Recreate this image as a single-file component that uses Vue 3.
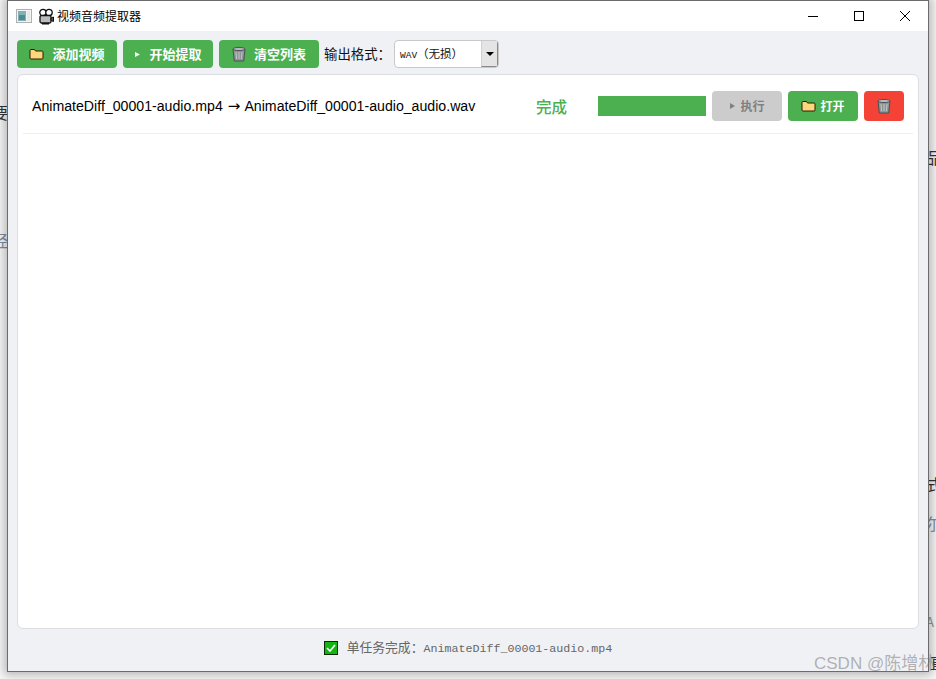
<script setup>
const fragments = [
  { text: '要', cls: 'frag-left', top: 103 },
  { text: '经', cls: 'frag-left frag-blue', top: 231 },
  { text: '品', cls: 'frag-right', top: 148 },
  { text: '式', cls: 'frag-right', top: 475 },
  { text: '尔', cls: 'frag-right frag-blue', top: 514 },
  { text: 'A', cls: 'frag-right frag-grey', top: 613 },
  { text: '直', cls: 'frag-right frag-far', top: 653 },
]
</script>

<template>
  <div class="page">
    <span v-for="f in fragments" :key="f.top" class="frag" :class="f.cls" :style="{ top: f.top + 'px' }">{{ f.text }}</span>
    <div class="top-scrap"></div>

    <div class="window">
      <header class="titlebar">
        <svg class="win-thumb" width="16" height="14" viewBox="0 0 16 14">
          <rect x="0.5" y="0.5" width="15" height="13" fill="#f4f4f4" stroke="#b0b0b0" />
          <rect x="2" y="2" width="8" height="10" fill="#7fb2b4" />
          <rect x="3" y="6" width="6" height="5" fill="#4f8a94" />
          <rect x="11" y="2" width="3" height="10" fill="#e4eaea" />
        </svg>
        <svg class="app-icon" width="16" height="17" viewBox="0 0 16 17">
          <circle cx="5" cy="4.500" r="3.200" fill="#fff" stroke="#111" stroke-width="1.300" />
          <circle cx="11" cy="4.500" r="3.200" fill="#fff" stroke="#111" stroke-width="1.300" />
          <rect x="2" y="7.500" width="11" height="7.500" rx="1.500" fill="#bbb" stroke="#111" stroke-width="1.300" />
          <path d="M13 10l2.500-1v4.500L13 12.500z" fill="#555" stroke="#111" />
          <rect x="4" y="15" width="7" height="1.500" fill="#111" />
        </svg>
        <span class="title">视频音频提取器</span>
        <div class="win-controls">
          <span class="ctl"><svg width="12" height="12" viewBox="0 0 12 12"><path d="M1 6.500h10" stroke="#000" /></svg></span>
          <span class="ctl"><svg width="12" height="12" viewBox="0 0 12 12"><rect x="1.500" y="1.500" width="9" height="9" fill="none" stroke="#000" /></svg></span>
          <span class="ctl"><svg width="12" height="12" viewBox="0 0 12 12"><path d="M1 1l10 10M11 1L1 11" stroke="#000" /></svg></span>
        </div>
      </header>

      <div class="body">
        <div class="toolbar">
          <button class="btn tool w100">
            <svg width="15" height="12" viewBox="0 0 15 12"><path d="M1 2.500a1 1 0 0 1 1-1h3.500l1 1.500H13a1 1 0 0 1 1 1V10a1 1 0 0 1-1 1H2a1 1 0 0 1-1-1z" fill="#ffd77a" stroke="#2a1d05" /></svg>
            <span>添加视频</span>
          </button>
          <button class="btn tool w90">
            <svg width="7" height="7" viewBox="0 0 7 7"><path d="M1 1l5 2.500L1 6z" fill="#fff" /></svg>
            <span>开始提取</span>
          </button>
          <button class="btn tool w100">
            <svg width="14" height="16" viewBox="0 0 14 16"><path d="M1 3h12l-1.300 12H2.300z" fill="#8d9597" stroke="#4a5052" /><ellipse cx="7" cy="3" rx="6" ry="1.600" fill="#b4babc" stroke="#4a5052" /><path d="M4 6l.6 7M7 6v7M10 6l-.6 7" stroke="#c0c6c8" /></svg>
            <span>清空列表</span>
          </button>
          <span class="fmt-label">输出格式：</span>
          <div class="combo">
            <span class="combo-text"><span class="mono">WAV</span>（无损）</span>
            <span class="combo-arrow"><i></i></span>
          </div>
        </div>

        <div class="panel">
          <div class="row">
            <span class="name">AnimateDiff_00001-audio.mp4 <span class="arrow">→</span> AnimateDiff_00001-audio_audio.wav</span>
            <span class="state">完成</span>
            <div class="bar"></div>
            <button class="btn act disabled">
              <svg width="7" height="8" viewBox="0 0 7 8"><path d="M1 1l5 3-5 3z" fill="#808080" /></svg>
              <span>执行</span>
            </button>
            <button class="btn act">
              <svg width="15" height="12" viewBox="0 0 15 12"><path d="M1 2.500a1 1 0 0 1 1-1h3.500l1 1.500H13a1 1 0 0 1 1 1V10a1 1 0 0 1-1 1H2a1 1 0 0 1-1-1z" fill="#ffd77a" stroke="#2a1d05" /></svg>
              <span>打开</span>
            </button>
            <button class="btn act del">
              <svg width="14" height="16" viewBox="0 0 14 16"><path d="M1 3h12l-1.300 12H2.300z" fill="#8d9597" stroke="#4a5052" /><ellipse cx="7" cy="3" rx="6" ry="1.600" fill="#b4babc" stroke="#4a5052" /><path d="M4 6l.6 7M7 6v7M10 6l-.6 7" stroke="#c0c6c8" /></svg>
            </button>
          </div>
        </div>

        <footer class="status">
          <span class="check"><svg width="10" height="8" viewBox="0 0 10 8"><path d="M1 4l3 3 5-6" fill="none" stroke="#fff" stroke-width="1.600" /></svg></span>
          <span class="status-text">单任务完成：<span class="mono-status">AnimateDiff_00001-audio.mp4</span></span>
        </footer>
      </div>
    </div>

    <span class="watermark">CSDN @陈增林</span>
  </div>
</template>

<style scoped>
.page {
  position: relative;
  width: 936px;
  height: 679px;
  overflow: hidden;
  background: #f7f7f7;
  font-family: "Noto Sans CJK SC", "Liberation Sans", sans-serif;
  box-sizing: border-box;
  padding-left: 7px;
}
.page * { box-sizing: border-box; }

.frag {
  position: absolute;
  font-size: 16px;
  line-height: 18px;
  color: #333;
}
.frag-left { left: -8px; }
.frag-right { left: 926px; }
.frag-far { left: 930px; }
.frag-blue { color: #7f8fa3; }
.frag-grey { color: #8a95a0; font-size: 13px; }
.top-scrap {
  position: absolute;
  left: 160px;
  top: 0;
  width: 260px;
  height: 1px;
  background: #777;
}

.window {
  position: relative;
  display: flex;
  flex-direction: column;
  width: 922px;
  height: 672px;
  background: #f0f1f5;
  border: 1px solid #6b6b6b;
  box-shadow: 0 0 9px 3px rgba(0, 0, 0, 0.26);
}
.titlebar {
  display: flex;
  align-items: center;
  height: 30px;
  background: #fff;
  flex: none;
  padding-left: 8px;
}
.win-thumb { flex: none; }
.app-icon { flex: none; margin-left: 6px; }
.title {
  margin-left: 3px;
  font-size: 12px;
  color: #000;
  line-height: 16px;
}
.win-controls {
  display: flex;
  margin-left: auto;
}
.ctl {
  display: flex;
  align-items: center;
  justify-content: center;
  width: 46px;
  height: 28px;
}

.body {
  flex: 1;
  display: flex;
  flex-direction: column;
  min-height: 0;
  padding: 9px 9px 0;
}
.toolbar {
  display: flex;
  align-items: center;
  gap: 6px;
  height: 28px;
  flex: none;
}
.btn {
  display: flex;
  align-items: center;
  justify-content: center;
  border: none;
  border-radius: 4px;
  background: #4caf50;
  color: #fff;
  font-family: inherit;
  font-weight: 700;
  padding: 0;
  height: 28px;
}
.tool { font-size: 13px; gap: 8px; }
.tool span { margin-top: -2px; }
.w100 { width: 100px; }
.w90 { width: 90px; }
.fmt-label {
  flex: none;
  width: 64px;
  font-size: 13.4px;
  color: #111;
  margin: 0 0 2px -1px;
  white-space: nowrap;
}
.combo {
  display: flex;
  flex: none;
  width: 105px;
  height: 28px;
  background: #fff;
  border: 1px solid #c8c8c8;
  border-radius: 4px;
  overflow: hidden;
}
.combo-text {
  flex: 1;
  font-size: 11.5px;
  line-height: 25px;
  padding-left: 5px;
  color: #111;
  white-space: nowrap;
}
.mono { font-family: "Liberation Mono", monospace; font-size: 9.5px; }
.combo-arrow {
  width: 17px;
  flex: none;
  display: flex;
  align-items: center;
  justify-content: center;
  background: #e4e4e4;
  border-left: 1px solid #d0d0d0;
  border-right: 1px solid #8a8a8a;
  border-bottom: 1px solid #8a8a8a;
}
.combo-arrow i {
  width: 0;
  height: 0;
  border-left: 4px solid transparent;
  border-right: 4px solid transparent;
  border-top: 4px solid #000;
}

.panel {
  flex: 1;
  min-height: 0;
  margin-top: 6px;
  background: #fff;
  border: 1px solid #dcdde1;
  border-radius: 6px;
  padding: 0 5px;
}
.row {
  display: flex;
  align-items: center;
  height: 59px;
  border-bottom: 1px solid #eeeeee;
  padding: 4px 8px 0 9px;
}
.name {
  width: 504px;
  flex: none;
  font-family: "Liberation Sans", sans-serif;
  font-size: 14.15px;
  color: #000;
  white-space: nowrap;
}
.arrow {
  font-family: "DejaVu Sans", sans-serif;
  font-size: 15px;
  margin: 0 1px;
}
.state {
  width: 62px;
  flex: none;
  font-size: 15.5px;
  font-weight: 500;
  color: #4caf50;
}
.bar {
  width: 108px;
  height: 20px;
  flex: none;
  background: #4caf50;
}
.act {
  height: 30px;
  width: 70px;
  flex: none;
  margin-left: 6px;
  font-size: 12px;
  gap: 4px;
}
.act span { margin-top: -1px; }
.disabled { background: #cccccc; color: #808080; }
.del { width: 40px; background: #f44336; }

.status {
  flex: none;
  height: 42px;
  display: flex;
  align-items: center;
  justify-content: center;
  gap: 9px;
  padding-bottom: 4px;
}
.check {
  width: 14px;
  height: 14px;
  display: flex;
  align-items: center;
  justify-content: center;
  background: #12b512;
  border: 1px solid #0a2a0a;
}
.status-text {
  font-size: 12.8px;
  color: #666;
  white-space: nowrap;
  margin-bottom: 3px;
}
.mono-status {
  font-family: "Liberation Mono", monospace;
  font-size: 11.67px;
}

.watermark {
  position: absolute;
  left: 814px;
  top: 653px;
  font-family: "Liberation Sans", "Noto Sans CJK SC", sans-serif;
  font-size: 17px;
  line-height: 22px;
  white-space: nowrap;
  color: rgba(120, 120, 120, 0.55);
}
</style>
